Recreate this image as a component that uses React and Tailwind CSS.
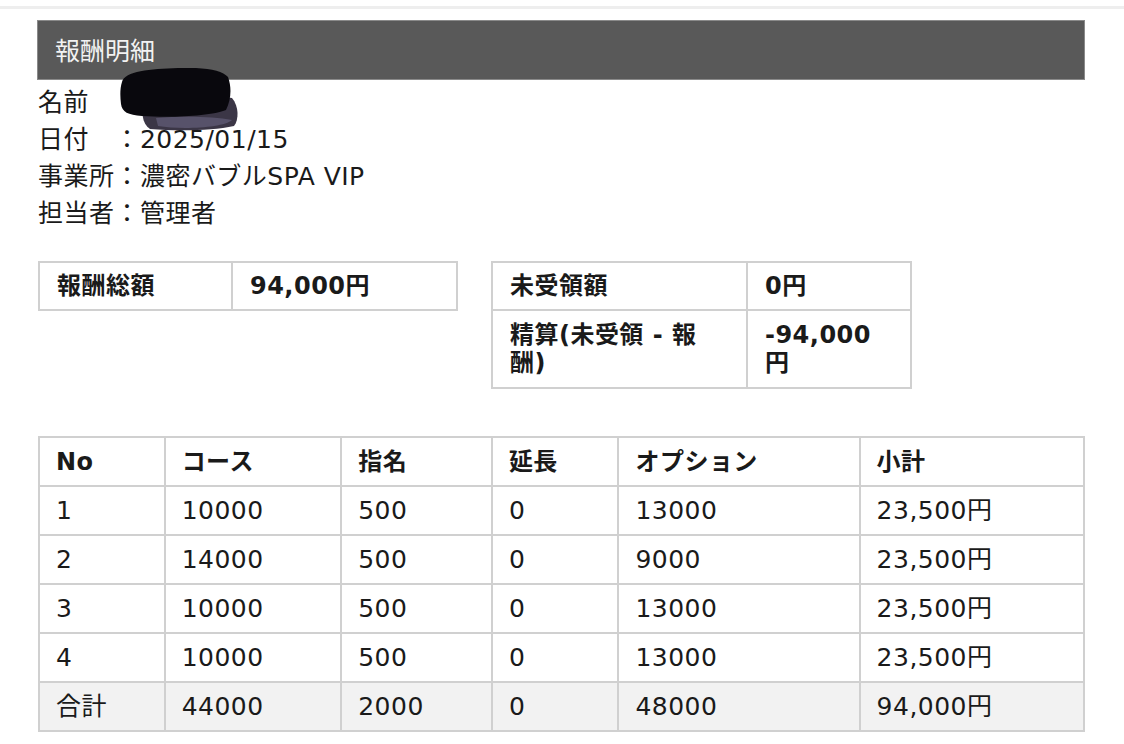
import React from 'react';

const rows = [
  ['1', '10000', '500', '0', '13000', '23,500円'],
  ['2', '14000', '500', '0', '9000', '23,500円'],
  ['3', '10000', '500', '0', '13000', '23,500円'],
  ['4', '10000', '500', '0', '13000', '23,500円'],
];

const total = ['合計', '44000', '2000', '0', '48000', '94,000円'];
const heads = ['No', 'コース', '指名', '延長', 'オプション', '小計'];
const widths = ['w-[126px]', 'w-[177px]', 'w-[151px]', 'w-[127px]', 'w-[242px]', 'w-[225px]'];

const Redaction = () => (
  <svg className="absolute left-[82px] top-[-16px]" width="122" height="64" viewBox="0 0 122 64">
    <path d="M26 32 C50 28 90 26 112 30 C119 38 119 52 114 58 C92 63 56 63 30 61 C22 56 20 42 26 32 Z" fill="#3b3646" />
    <path d="M36 50 C60 48 92 48 112 52 C104 60 60 62 38 58 Z" fill="#57526a" />
    <path d="M2 14 C5 3 30 1 58 0 C84 -1 102 2 108 9 C112 20 111 32 106 42 C92 48 52 50 22 48 C8 47 2 44 1 36 C0 28 0 20 2 14 Z" fill="#09080d" />
  </svg>
);

export default function App() {
  return (
    <div className="min-h-screen bg-white text-[#1a1a1a] tracking-[0.03em] font-['DejaVu_Sans','Noto_Sans_CJK_JP',sans-serif]">
      <div className="h-[6px]" />
      <div className="h-[3px] bg-[#eeeeee]" />
      <div className="pl-[37px] pr-[39px] pt-[11px]">
        <div className="h-[60px] bg-[#595959] border border-[#8a8a8a] flex items-center pl-[17px] text-[#f2f2f2] text-[25px] tracking-normal font-['Noto_Sans_CJK_JP',sans-serif]">
          報酬明細
        </div>

        <div className="mt-[4px] pl-[1px] text-[25px] leading-[37px]">
          <div className="relative">
            名前　：
            <Redaction />
          </div>
          <div>日付　：2025/01/15</div>
          <div>事業所：濃密バブルSPA VIP</div>
          <div>担当者：管理者</div>
        </div>

        <div className="mt-[29px] flex items-start gap-[33px] pl-[1px] text-[24px] font-bold">
          <table className="border-collapse">
            <tbody>
              <tr className="h-[48px]">
                <td className="w-[193px] border-2 border-[#d0d0d0] px-[17px]">報酬総額</td>
                <td className="w-[225px] border-2 border-[#d0d0d0] px-[17px]">94,000円</td>
              </tr>
            </tbody>
          </table>
          <table className="border-collapse">
            <tbody>
              <tr className="h-[48px]">
                <td className="w-[255px] border-2 border-[#d0d0d0] px-[17px]">未受領額</td>
                <td className="w-[164px] border-2 border-[#d0d0d0] px-[17px]">0円</td>
              </tr>
              <tr className="h-[78px] leading-[28px]">
                <td className="border-2 border-[#d0d0d0] px-[17px]">
                  精算(未受領 - 報<br />酬)
                </td>
                <td className="border-2 border-[#d0d0d0] px-[17px]">
                  -94,000<br />円
                </td>
              </tr>
            </tbody>
          </table>
        </div>

        <table className="mt-[47px] ml-[1px] border-collapse text-[25px]">
          <thead>
            <tr className="h-[49px] font-bold text-[24px]">
              {heads.map((h, i) => (
                <th key={h} className={`${widths[i]} border-2 border-[#d0d0d0] px-[16px] text-left`}>
                  {h}
                </th>
              ))}
            </tr>
          </thead>
          <tbody>
            {rows.map((r) => (
              <tr key={r[0]} className="h-[49px]">
                {r.map((c, i) => (
                  <td key={i} className="border-2 border-[#d0d0d0] px-[16px]">
                    {c}
                  </td>
                ))}
              </tr>
            ))}
            <tr className="h-[49px] bg-[#f2f2f2]">
              {total.map((c, i) => (
                <td key={i} className="border-2 border-[#d0d0d0] px-[16px]">
                  {c}
                </td>
              ))}
            </tr>
          </tbody>
        </table>
      </div>
    </div>
  );
}
